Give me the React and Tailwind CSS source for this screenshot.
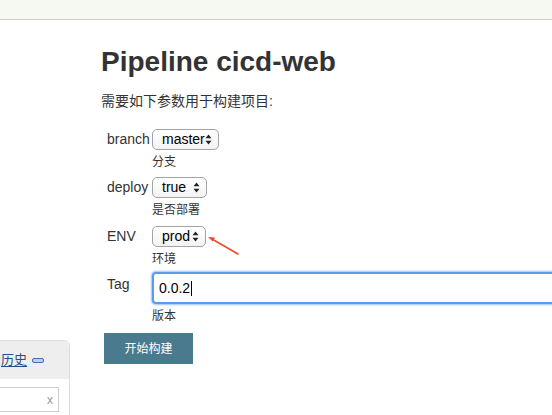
import React from 'react';

const font = { fontFamily: '"Liberation Sans", "Noto Sans CJK SC", Arial, sans-serif' };

function Arrows() {
  return (
    <svg width="7" height="11" viewBox="0 0 7 11" className="shrink-0">
      <path d="M3.5 0.5 L6.5 4.2 L0.5 4.2 Z" fill="#222" />
      <path d="M3.5 10.5 L6.5 6.8 L0.5 6.8 Z" fill="#222" />
    </svg>
  );
}

function Select({ value, width }) {
  return (
    <div
      className="h-[21px] flex items-center justify-between pl-[9px] pr-[6px] border border-[#a3a3a3] rounded-[5px] bg-gradient-to-b from-white to-[#f3f3f3] text-[14px] text-black"
      style={{ width }}
    >
      <span>{value}</span>
      <Arrows />
    </div>
  );
}

function Row({ label, hint, children, labelPad = 'pt-0', gap = '' }) {
  return (
    <div className={`flex ${gap}`}>
      <div className={`w-[51px] shrink-0 pl-[6px] text-[14px] leading-[21px] text-[#333] ${labelPad}`}>{label}</div>
      <div className="flex flex-col items-start min-w-0">
        {children}
        <div className="mt-[4px] text-[12px] leading-[16px] text-[#333]">{hint}</div>
      </div>
    </div>
  );
}

export default function App() {
  return (
    <div className="relative w-[552px] h-[415px] overflow-hidden bg-white" style={font}>
      <div className="h-[20px] bg-[#f6f9f1] border-b border-[#cdd0c9]" />

      <div className="flex">
        {/* side panel */}
        <div className="w-[101px] shrink-0">
          <div className="mt-[320px] -ml-[40px] w-[110px] border border-[#dcdcdc] rounded-tr-[6px] bg-white">
            <div className="h-[38px] bg-[#eeeeee] rounded-tr-[6px] flex items-center pl-[40px]">
              <a className="text-[13px] text-[#1f4e8c] underline underline-offset-2">历史</a>
              <span className="ml-[5px] w-[12px] h-[5px] rounded-[2px] border border-[#3b70b4] bg-[#b9d1ee]" />
            </div>
            <div className="pt-[8px] pr-[10px] pb-[8px]">
              <div className="h-[25px] border border-[#cccccc] flex items-center justify-end pr-[5px] text-[12px] text-[#999]">x</div>
            </div>
          </div>
        </div>

        {/* main */}
        <div className="flex-1 min-w-0">
          <h1 className="mt-[26px] text-[28px] leading-[32px] font-bold text-[#333]">Pipeline cicd-web</h1>
          <p className="mt-[13px] text-[14px] leading-[20px] text-[#333]">需要如下参数用于构建项目:</p>

          <div className="mt-[18px]">
            <Row label="branch" hint="分支">
              <Select value="master" width="67px" />
            </Row>
            <Row label="deploy" hint="是否部署" gap="mt-[7px]">
              <Select value="true" width="55px" />
            </Row>
            <Row label="ENV" hint="环境" gap="mt-[8px]">
              <Select value="prod" width="54px" />
            </Row>
            <Row label="Tag" hint="版本" gap="mt-[5px]" labelPad="pt-[2px]">
              <div className="w-[430px] h-[32px] rounded-[4px] border-2 border-[#5b9bec] shadow-[0_0_2px_1px_#9cc3f5] bg-white flex items-center pl-[5px] text-[14px] text-black">
                <span>0.0.2</span>
                <span className="ml-[1px] w-px h-[15px] bg-black" />
              </div>
            </Row>
            <button className="mt-[9px] ml-[3px] w-[89px] h-[31px] bg-[#4a7a8e] text-white text-[12px]">开始构建</button>
          </div>
        </div>
      </div>

      <svg className="absolute left-[200px] top-[230px]" width="45" height="30" viewBox="0 0 45 30">
        <line x1="38" y1="24" x2="12" y2="9" stroke="#ee4b2b" strokeWidth="1.6" strokeLinecap="round" />
        <path d="M8 7 L15 7.6 L12.6 11.6 Z" fill="#ee4b2b" />
      </svg>
    </div>
  );
}
